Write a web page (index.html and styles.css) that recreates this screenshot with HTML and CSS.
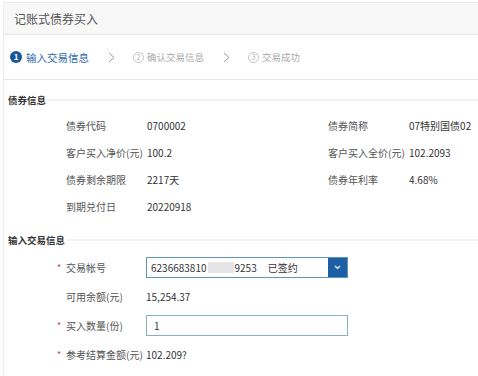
FILE: index.html
```html
<!DOCTYPE html>
<html lang="zh-CN">
<head>
    <meta charset="UTF-8">
    <meta name="viewport" content="width=device-width, initial-scale=1.0">
    <title>记账式债券买入</title>
    <link rel="stylesheet" href="styles.css">
</head>
<body>
    <div class="panel">
        <div class="header">记账式债券买入</div>
        <div class="steps">
            <div class="step active">
                <span class="num">1</span>
                <span class="step-text">输入交易信息</span>
            </div>
            <svg class="chev" width="7" height="11" viewBox="0 0 7 11"><polyline points="1,1 6,5.5 1,10" fill="none" stroke="#9a9a9a" stroke-width="1"/></svg>
            <div class="step">
                <span class="num">2</span>
                <span class="step-text">确认交易信息</span>
            </div>
            <svg class="chev" width="7" height="11" viewBox="0 0 7 11"><polyline points="1,1 6,5.5 1,10" fill="none" stroke="#9a9a9a" stroke-width="1"/></svg>
            <div class="step">
                <span class="num">3</span>
                <span class="step-text">交易成功</span>
            </div>
        </div>

        <div class="section-title"><span>债券信息</span></div>
        <div class="info">
            <div class="label">债券代码</div>
            <div class="value">0700002</div>
            <div class="label">债券简称</div>
            <div class="value">07特别国债02</div>
            <div class="label">客户买入净价(元)</div>
            <div class="value">100.2</div>
            <div class="label">客户买入全价(元)</div>
            <div class="value">102.2093</div>
            <div class="label">债券剩余期限</div>
            <div class="value">2217天</div>
            <div class="label">债券年利率</div>
            <div class="value">4.68%</div>
            <div class="label">到期兑付日</div>
            <div class="value">20220918</div>
        </div>

        <div class="section-title second"><span>输入交易信息</span></div>
        <div class="form">
            <div class="row">
                <span class="req">*</span>
                <span class="label">交易帐号</span>
                <div class="select">
                    <span class="acct">6236683810<span class="blur"></span>9253</span>
                    <span class="signed">已签约</span>
                    <span class="drop">
                        <svg width="7" height="5" viewBox="0 0 7 5"><polyline points="1,1 3.5,3.5 6,1" fill="none" stroke="#ffffff" stroke-width="1.2"/></svg>
                    </span>
                </div>
            </div>
            <div class="row">
                <span class="req"></span>
                <span class="label">可用余额(元)</span>
                <span class="value">15,254.37</span>
            </div>
            <div class="row">
                <span class="req">*</span>
                <span class="label">买入数量(份)</span>
                <div class="input">1</div>
            </div>
            <div class="row">
                <span class="req">*</span>
                <span class="label">参考结算金额(元)</span>
                <span class="value">102.209?</span>
            </div>
        </div>
    </div>
</body>
</html>
```

FILE: styles.css
```css
body {
    font-family: "Noto Sans CJK SC", "Noto Sans", sans-serif;
    background-color: #ffffff;
    margin: 0;
    padding: 0;
}
.panel {
    margin: 2px 0 0 3px;
    border-top: 1px solid #ececec;
    border-left: 1px solid #ececec;
    height: 380px;
}
.header {
    height: 31px;
    line-height: 31px;
    padding-left: 10px;
    background-color: #f8f8f8;
    border-bottom: 1px solid #e4e4e4;
    font-size: 12px;
    color: #555;
}
.steps {
    height: 44px;
    display: flex;
    align-items: center;
    padding-left: 6px;
    border-bottom: 1px solid #e8e8e8;
}
.step {
    display: flex;
    align-items: center;
    color: #aaa;
    font-size: 9.5px;
}
.step .num {
    width: 9px;
    height: 9px;
    border: 1px solid #c4c4c4;
    border-radius: 50%;
    font-size: 7px;
    line-height: 9px;
    text-align: center;
    margin-right: 3px;
    color: #b0b0b0;
}
.step.active {
    color: #2c6aa6;
    font-size: 10.5px;
}
.step.active .num {
    width: 12px;
    height: 12px;
    line-height: 12px;
    border: none;
    background-color: #17579a;
    color: #ffffff;
    font-size: 8px;
    font-weight: bold;
    margin-right: 4px;
}
.chev {
    margin: 0 18px 0 19px;
}
.section-title {
    margin-top: 10px;
    height: 20px;
    display: flex;
    align-items: center;
    padding-left: 4px;
    font-size: 9.5px;
    font-weight: bold;
    color: #333;
}
.section-title::after {
    content: "";
    flex: 1;
    border-top: 2px solid #f3f3f3;
    margin-left: 2px;
}
.section-title.second {
    margin-top: 10px;
    margin-bottom: 3px;
}
.info {
    display: grid;
    grid-template-columns: 81px 181px 81px 1fr;
    grid-auto-rows: 27px;
    align-items: center;
    padding-left: 62px;
    padding-top: 2px;
    font-size: 10px;
}
.label {
    color: #555;
}
.value {
    color: #333;
}
.form {
    padding-left: 53px;
    font-size: 10px;
}
.row {
    height: 29px;
    display: flex;
    align-items: center;
}
.req {
    width: 9px;
    color: #d04040;
    font-size: 9px;
}
.row .label {
    width: 80px;
}
.select {
    border: 1px solid #5e97b4;
    display: flex;
    align-items: center;
    padding-left: 4px;
    box-sizing: border-box;
    width: 202px;
    height: 21px;
    color: #333;
}
.acct {
    display: flex;
    align-items: center;
}
.blur {
    display: inline-block;
    width: 26px;
    height: 11px;
    background-color: #e4e4e4;
    margin: 0 1px;
}
.signed {
    margin-left: 11px;
    flex: 1;
}
.drop {
    width: 19px;
    height: 19px;
    background-color: #1d5fa5;
    display: flex;
    align-items: center;
    justify-content: center;
}
.input {
    width: 202px;
    height: 21px;
    box-sizing: border-box;
    border: 1px solid #88b0bd;
    padding-left: 7px;
    line-height: 19px;
    color: #333;
}
```
